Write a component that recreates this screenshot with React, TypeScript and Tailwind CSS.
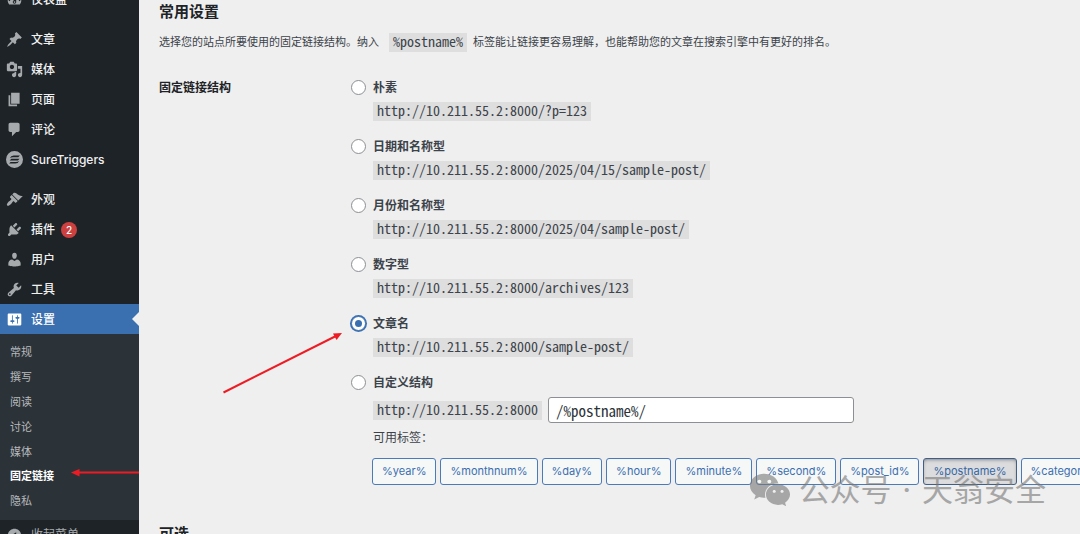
import React, { useState } from 'react';
import { FaWeixin } from 'react-icons/fa';

const ICONS = {
  dashboard:
    'M3.76 16h12.48c1.1-1.37 1.76-3.11 1.76-5 0-4.42-3.58-8-8-8s-8 3.58-8 8c0 1.89.66 3.63 1.76 5zM10 4c.55 0 1 .45 1 1s-.45 1-1 1-1-.45-1-1 .45-1 1-1zM6 6c.55 0 1 .45 1 1s-.45 1-1 1-1-.45-1-1 .45-1 1-1zm8 0c.55 0 1 .45 1 1s-.45 1-1 1-1-.45-1-1 .45-1 1-1zm-5.37 5.55L12 7v6c0 1.1-.9 2-2 2s-2-.9-2-2c0-.57.24-1.08.63-1.45zM4 10c.55 0 1 .45 1 1s-.45 1-1 1-1-.45-1-1 .45-1 1-1zm12 0c.55 0 1 .45 1 1s-.45 1-1 1-1-.45-1-1 .45-1 1-1zm-5 3c0-.55-.45-1-1-1s-1 .45-1 1 .45 1 1 1 1-.45 1-1z',
  post: 'M10.44 3.02l1.82-1.82 6.36 6.35-1.83 1.82c-1.05-.68-2.48-.57-3.41.36l-.75.75c-.92.93-1.04 2.35-.35 3.41l-1.83 1.82-2.41-2.41-2.8 2.79c-.42.42-3.38 2.71-3.8 2.29s1.86-3.39 2.28-3.81l2.79-2.79L4.1 9.36l1.83-1.82c1.05.69 2.48.57 3.4-.36l.75-.75c.93-.92 1.05-2.35.36-3.41z',
  media:
    'M13 11V4c0-.55-.45-1-1-1h-1.67L9 1H5L3.67 3H2c-.55 0-1 .45-1 1v7c0 .55.45 1 1 1h10c.55 0 1-.45 1-1zM7 4.5c1.38 0 2.5 1.12 2.5 2.5S8.38 9.5 7 9.5 4.5 8.38 4.5 7 5.62 4.5 7 4.5zM14 6h5v10.5c0 1.38-1.12 2.5-2.5 2.5S14 17.88 14 16.5s1.12-2.5 2.5-2.5c.17 0 .34.02.5.05V9h-3V6zm-4 8.05V13h2v3.5c0 1.38-1.12 2.5-2.5 2.5S7 17.88 7 16.5 8.12 14 9.5 14c.17 0 .34.02.5.05z',
  page: 'M6 15V2h10v13H6zm-1 1h8v2H3V5h2v11z',
  comments:
    'M5 2h9c1.1 0 2 .9 2 2v7c0 1.1-.9 2-2 2h-2l-5 5v-5H5c-1.1 0-2-.9-2-2V4c0-1.1.9-2 2-2z',
  triggers:
    'M10 0a10 10 0 1 0 0 20a10 10 0 1 0 0-20zM9 5.4h7.400l-2 2H8.200Q6 7.400 4.600 8.600Q5.600 5.400 9 5.400zM6.400 9.200h9.600l-2 2H4.200zM5.400 12.800h6.200Q14 12.800 15.400 11.700Q14.400 14.800 11 14.800H3.600z',
  appearance:
    'M14.48 11.06L7.41 3.99l1.5-1.5c.5-.56 2.3-.47 3.51.32 1.21.8 1.43 1.28 2.91 2.1 1.18.64 2.45 1.26 4.45.85zm-.71.71L6.7 4.7 4.93 6.47c-.39.39-.39 1.02 0 1.41l1.06 1.06c.39.39.39 1.03 0 1.42-.6.6-1.43 1.11-2.21 1.69-.35.26-.7.53-1.01.84C1.43 14.23.4 16.08 1.4 17.07c.99 1 2.84-.03 4.18-1.36.31-.31.58-.66.85-1.02.57-.78 1.08-1.61 1.69-2.21.39-.39 1.02-.39 1.41 0l1.06 1.06c.39.39 1.02.39 1.41 0z',
  plugins:
    'M13.11 4.36L9.87 7.6 8 5.73l3.24-3.24c.35-.34 1.05-.2 1.56.32.52.51.66 1.21.31 1.55zm-8 1.77l.91-1.12 9.01 9.01-1.19.84c-.71.71-2.63 1.16-3.82 1.16H6.14L4.9 17.26c-.59.59-1.54.59-2.12 0-.59-.58-.59-1.53 0-2.12l1.24-1.24v-3.88c0-1.13.4-3.19 1.09-3.89zm7.26 3.97l3.24-3.24c.34-.35 1.04-.21 1.55.31.52.51.66 1.21.31 1.55l-3.24 3.25z',
  users:
    'M10 9.25c-2.27 0-2.73-3.44-2.73-3.44C7 4.02 7.82 2 9.97 2c2.16 0 2.98 2.02 2.71 3.81 0 0-.41 3.44-2.68 3.44zm0 2.57L12.72 10c2.39 0 4.52 2.33 4.52 4.53v2.49s-3.65 1.13-7.24 1.13c-3.65 0-7.24-1.13-7.24-1.13v-2.49c0-2.25 1.94-4.48 4.47-4.48z',
  tools:
    'M16.68 9.77c-1.34 1.34-3.3 1.67-4.95.99l-5.41 6.52c-.99.99-2.59.99-3.58 0s-.99-2.59 0-3.57l6.52-5.42c-.68-1.65-.35-3.61.99-4.95 1.28-1.28 3.12-1.62 4.72-1.06l-2.89 2.89 2.82 2.82 2.86-2.87c.53 1.58.18 3.39-1.08 4.65zM3.81 16.21c.4.39 1.04.39 1.43 0 .4-.4.4-1.04 0-1.43-.39-.4-1.03-.4-1.43 0-.39.39-.39 1.03 0 1.43z',
  settings:
    'M18 16V4c0-.55-.45-1-1-1H3c-.55 0-1 .45-1 1v12c0 .55.45 1 1 1h14c.55 0 1-.45 1-1zM8 11h1c.55 0 1 .45 1 1s-.45 1-1 1H8v1.5c0 .28-.22.5-.5.5s-.5-.22-.5-.5V13H6c-.55 0-1-.45-1-1s.45-1 1-1h1V5.5c0-.28.22-.5.5-.5s.5.22.5.5V11zm5-2h-1c-.55 0-1-.45-1-1s.45-1 1-1h1V5.5c0-.28.22-.5.5-.5s.5.22.5.5V7h1c.55 0 1 .45 1 1s-.45 1-1 1h-1v5.5c0 .28-.22.5-.5.5s-.5-.22-.5-.5V9z',
  collapse:
    'M10 2.16c4.33 0 7.84 3.51 7.84 7.84s-3.51 7.84-7.84 7.84S2.16 14.33 2.16 10 5.71 2.16 10 2.16zm2 11.72V6.12L6.18 9.97z',
};

type IconName = keyof typeof ICONS;

interface MenuEntry {
  icon: IconName;
  label: string;
  badge?: number;
  current?: boolean;
}

const MENU_GROUPS: MenuEntry[][] = [
  [{ icon: 'dashboard', label: '仪表盘' }],
  [
    { icon: 'post', label: '文章' },
    { icon: 'media', label: '媒体' },
    { icon: 'page', label: '页面' },
    { icon: 'comments', label: '评论' },
    { icon: 'triggers', label: 'SureTriggers' },
  ],
  [
    { icon: 'appearance', label: '外观' },
    { icon: 'plugins', label: '插件', badge: 2 },
    { icon: 'users', label: '用户' },
    { icon: 'tools', label: '工具' },
    { icon: 'settings', label: '设置', current: true },
  ],
];

const SUBMENU = ['常规', '撰写', '阅读', '讨论', '媒体', '固定链接', '隐私'];

const SITE = 'http://10.211.55.2:8000';

const STRUCTURES = [
  { id: 'plain', label: '朴素', example: '/?p=123' },
  { id: 'day-name', label: '日期和名称型', example: '/2025/04/15/sample-post/' },
  { id: 'month-name', label: '月份和名称型', example: '/2025/04/sample-post/' },
  { id: 'numeric', label: '数字型', example: '/archives/123' },
  { id: 'post-name', label: '文章名', example: '/sample-post/' },
];

const TAGS = ['year', 'monthnum', 'day', 'hour', 'minute', 'second', 'post_id', 'postname', 'category'];

const Icon: React.FC<{ name: IconName }> = ({ name }) => (
  <svg viewBox="0 0 20 20" className="w-[17px] h-[17px] shrink-0" fill="currentColor" fillRule="evenodd" aria-hidden="true">
    <path d={ICONS[name]} />
  </svg>
);

const MenuLink: React.FC<{ entry: MenuEntry }> = ({ entry }) => (
  <a
    href="#"
    className={`relative flex items-center h-[30px] pl-[6px] gap-2 text-xs font-medium ${
      entry.current ? 'bg-[#3a6fb0] text-white' : 'text-[#f0f0f1]'
    }`}
  >
    <span className={entry.current ? 'text-white' : 'text-[#a7aaad]'}>
      <Icon name={entry.icon} />
    </span>
    <span className="pt-0.5">
      {entry.label}
      {entry.badge && (
        <span className="inline-block ml-[6px] w-4 h-4 rounded-full bg-[#cc4040] text-white text-[10px] leading-4 text-center">
          {entry.badge}
        </span>
      )}
    </span>
    {entry.current && (
      <span className="absolute right-0 top-2 border-y-[7px] border-r-[7px] border-y-transparent border-r-[#efefef]" />
    )}
  </a>
);

const Sidebar: React.FC = () => (
  <nav className="w-[139px] shrink-0 bg-[#1d2327] overflow-hidden">
    <div className="-mt-4">
      {MENU_GROUPS.map((group, i) => (
        <div key={i} className="mb-[10px] last:mb-0">
          {group.map(entry => (
            <MenuLink key={entry.label} entry={entry} />
          ))}
        </div>
      ))}
    </div>
    <ul className="grid auto-rows-fr h-[186px] py-[6px] bg-[#2c3338] text-[11px]">
      {SUBMENU.map(item => (
        <li key={item} className="flex items-center pl-[10px]">
          <a href="#" className={item === '固定链接' ? 'text-white font-bold' : 'text-[#b6b9bc]'}>
            {item}
          </a>
        </li>
      ))}
    </ul>
    <button type="button" className="flex items-center h-[30px] pl-[6px] gap-2 text-xs text-[#a7aaad]">
      <Icon name="collapse" />
      收起菜单
    </button>
  </nav>
);

const Code: React.FC<{ children: React.ReactNode }> = ({ children }) => (
  <code className="inline-block h-[19px] px-1 bg-[#dedede] font-['Noto_Sans_Mono_CJK_SC','DejaVu_Sans_Mono',monospace] text-sm leading-[17px] whitespace-nowrap">
    {children}
  </code>
);

interface OptionProps {
  id: string;
  label: string;
  selected: string;
  onSelect: (id: string) => void;
  children: React.ReactNode;
}

const Option: React.FC<OptionProps> = ({ id, label, selected, onSelect, children }) => (
  <div>
    <div className="flex items-center gap-[7px] h-5">
      <input
        type="radio"
        id={id}
        name="structure"
        checked={selected === id}
        onChange={() => onSelect(id)}
        className="appearance-none flex items-center justify-center w-[15px] h-[15px] shrink-0 rounded-full border border-[#8c8f94] bg-white checked:border-[#3a6fb0] checked:ring-1 checked:ring-[#3a6fb0] checked:before:w-[7px] checked:before:h-[7px] checked:before:rounded-full checked:before:bg-[#3a6fb0]"
      />
      <label htmlFor={id} className="pt-0.5 text-xs font-bold">
        {label}
      </label>
    </div>
    <div className="ml-[22px] mt-[5px]">{children}</div>
  </div>
);

const App: React.FC = () => {
  const [selected, setSelected] = useState('post-name');
  const [custom, setCustom] = useState('/%postname%/');

  return (
    <div className="relative flex h-screen overflow-hidden bg-[#efefef] text-[#3c434a] font-['Inter','Noto_Sans_CJK_SC',sans-serif]">
      <Sidebar />

      <main className="flex-1 min-w-0 pl-5 overflow-hidden">
        <h2 className="text-[15px] leading-6 font-bold text-[#1d2327]">常用设置</h2>
        <p className="flex items-center mt-[6px] h-6 text-[11px] whitespace-nowrap">
          选择您的站点所要使用的固定链接结构。纳入
          <span className="flex ml-[10px] mr-[6px]">
            <Code>%postname%</Code>
          </span>
          标签能让链接更容易理解，也能帮助您的文章在搜索引擎中有更好的排名。
        </p>

        <fieldset className="flex mt-[23px] min-w-0" aria-labelledby="structure-title">
          <div id="structure-title" className="w-48 shrink-0 pt-px text-xs leading-5 font-bold text-[#1d2327]">
            固定链接结构
          </div>
          <div className="flex flex-col flex-1 min-w-0 gap-[15px]">
            {STRUCTURES.map(({ id, label, example }) => (
              <Option key={id} id={id} label={label} selected={selected} onSelect={setSelected}>
                <div className="flex">
                  <Code>{SITE + example}</Code>
                </div>
              </Option>
            ))}

            <Option id="custom" label="自定义结构" selected={selected} onSelect={setSelected}>
              <div className="flex items-center gap-[6px]">
                <Code>{SITE}</Code>
                <input
                  type="text"
                  aria-label="自定义结构"
                  value={custom}
                  onChange={e => setCustom(e.target.value)}
                  className="w-[306px] h-[26px] px-[7px] rounded-[3px] border border-[#8c8f94] bg-white text-[#2c3338] font-['Noto_Sans_Mono_CJK_SC','DejaVu_Sans_Mono',monospace] text-[15px]"
                />
              </div>
              <p className="mt-[5px] text-xs leading-5">可用标签：</p>
              <div className="flex gap-1 mt-[10px] -ml-px">
                {TAGS.map(tag => (
                  <button
                    key={tag}
                    type="button"
                    aria-pressed={tag === 'postname'}
                    className={`h-[27px] px-[9px] rounded-[3px] border text-[11px] ${
                      tag === 'postname'
                        ? 'border-[#3f5f86] bg-[#dcdcde] text-[#3567a3] shadow-[inset_0_2px_5px_-3px_#1d2327]'
                        : 'border-[#4a7ab8] bg-[#f6f7f7] text-[#3a6fb0]'
                    }`}
                  >
                    %{tag}%
                  </button>
                ))}
              </div>
            </Option>
          </div>
        </fieldset>

        <h2 className="mt-[37px] text-[15px] leading-6 font-bold text-[#1d2327]">可选</h2>
      </main>

      {/* Annotation arrows */}
      <svg className="absolute left-0 top-0 w-[360px] h-[500px] pointer-events-none" viewBox="0 0 360 500" aria-hidden="true">
        <g stroke="#ed1c24" strokeWidth="2" fill="#ed1c24">
          <path d="M223.500 392.500L336 336" />
          <path d="M342 333L333 333.500L336.500 340Z" stroke="none" />
          <path d="M139 472.500H78" />
          <path d="M71 472.500L79.500 469V476.500Z" stroke="none" />
        </g>
      </svg>

      {/* Account watermark */}
      <div className="absolute right-[34px] top-[468px] flex items-center gap-2 text-[#777777] opacity-60 pointer-events-none">
        <FaWeixin className="w-[42px] h-[42px]" />
        <span className="text-[31px] leading-[44px] whitespace-nowrap">
          公众号<span className="px-0.5"> · </span>天翁安全
        </span>
      </div>
    </div>
  );
};

export default App;
